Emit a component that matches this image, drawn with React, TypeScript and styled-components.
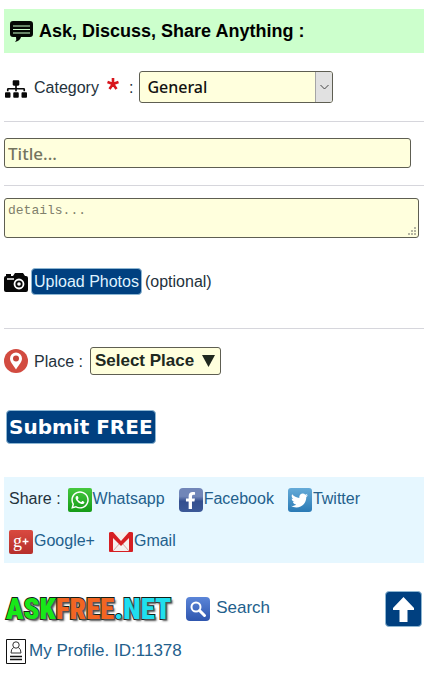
import React from "react";
import styled, { createGlobalStyle } from "styled-components";
import { FaFacebookF, FaSitemap, FaTwitter, FaWhatsapp } from "react-icons/fa";

const GlobalStyle = createGlobalStyle`
  *, *::before, *::after { box-sizing: border-box; }
  body {
    margin: 0;
    background: #fff;
    color: #24323c;
    font: 16px/20px "Liberation Sans", Arial, sans-serif;
  }
  button, input, select, textarea { margin: 0; font: inherit; }
`;

const Page = styled.main`
  display: flex;
  flex-direction: column;
  padding: 9px 8px 8px 4px;
`;

const Heading = styled.h1`
  display: flex;
  align-items: center;
  gap: 6px;
  height: 44px;
  margin: 0;
  padding: 0 6px;
  background: #cfc;
  color: #000;
  font-size: 18px;
  line-height: 24px;
`;

const Form = styled.form`
  display: flex;
  flex-direction: column;
  align-items: flex-start;
`;

const Rule = styled.hr`
  width: 100%;
  height: 1px;
  margin: 0;
  border: 0;
  background: #d6d6dc;
`;

const Row = styled.div<{ $top: number; $bottom: number }>`
  display: flex;
  align-items: center;
  width: 100%;
  padding: ${(p) => p.$top}px 0 ${(p) => p.$bottom}px;
`;

const Label = styled.label`
  margin: 0 7px 0 6px;
  padding-top: 2px;
`;

const Colon = styled.span`
  margin: 0 6px 0 9px;
  padding-top: 2px;
`;

const SelectWrap = styled.div`
  display: grid;
  width: 194px;
  height: 32px;
  overflow: hidden;
  border: 1px solid #5e5e52;
  border-radius: 3px;
  background: #ffd;
`;

const Select = styled.select`
  grid-area: 1 / 1;
  padding: 0 24px 0 7px;
  border: 0;
  appearance: none;
  background: transparent;
  color: #111;
  font: 500 16px/28px "Noto Sans", sans-serif;
`;

const SelectArrow = styled.span`
  grid-area: 1 / 1;
  justify-self: end;
  display: flex;
  align-items: center;
  justify-content: center;
  width: 17px;
  border-left: 1px solid #a5a5a5;
  background: #e1e1e1;
  pointer-events: none;
`;

const TitleInput = styled.input`
  width: calc(100% - 13px);
  height: 30px;
  margin: 16px 0 17px;
  padding: 0 3px;
  border: 1px solid #5e5e52;
  border-radius: 3px;
  background: #ffd;
  font: 500 17px/28px "Noto Sans", sans-serif;
  &::placeholder { color: #74745f; opacity: 1; }
`;

const DetailsWrap = styled.div`
  position: relative;
  width: calc(100% - 5px);
  margin-top: 12px;
`;

const Details = styled.textarea`
  display: block;
  width: 100%;
  height: 40px;
  padding: 4px 3px;
  border: 1px solid #5e5e52;
  border-radius: 3px;
  background: #ffd;
  resize: none;
  font: 13px/16px "Liberation Mono", monospace;
  &::placeholder { color: #80806c; opacity: 1; }
`;

const Grip = styled.svg`
  position: absolute;
  right: 3px;
  bottom: 3px;
`;

const BlueButton = styled.button<{ $large?: boolean }>`
  height: ${(p) => (p.$large ? 34 : 27)}px;
  margin: ${(p) => (p.$large ? "20px 2px 33px" : "0 3px")};
  padding: 0 2px;
  border: 1px solid #8db6d2;
  border-radius: 4px;
  background: #004080;
  color: ${(p) => (p.$large ? "#fff" : "#dff2ff")};
  font: ${(p) =>
    p.$large
      ? 'bold 20px/30px "DejaVu Sans", sans-serif'
      : '16px/24px "Liberation Sans", Arial, sans-serif'};
`;

const PlaceButton = styled.button`
  display: flex;
  align-items: center;
  gap: 8px;
  height: 28px;
  padding: 0 5px 0 4px;
  border: 1px solid #5e5e52;
  border-radius: 3px;
  background: #ffd;
  color: #20281f;
  font-size: 17px;
  line-height: 24px;
  font-weight: bold;
`;

const Share = styled.section`
  display: flex;
  flex-wrap: wrap;
  align-content: flex-start;
  column-gap: 14px;
  row-gap: 18px;
  padding: 11px 5px 9px;
  background: #e6f7ff;
`;

const ShareGroup = styled.div`
  display: flex;
  align-items: center;
  gap: 7px;
`;

const Link = styled.a<{ $gap?: number; $size?: number }>`
  display: flex;
  align-items: center;
  gap: ${(p) => p.$gap ?? 1}px;
  color: #23608c;
  font-size: ${(p) => p.$size ?? 16}px;
  text-decoration: none;
  svg { flex: none; }
`;

const LinkText = styled.span`
  padding-bottom: 2px;
`;

const Badge = styled.span<{ $fill: string; $round: number }>`
  display: flex;
  align-items: center;
  justify-content: center;
  width: 24px;
  height: 24px;
  border-radius: ${(p) => p.$round}px;
  background: ${(p) => p.$fill};
  color: #fff;
`;

const Footer = styled.footer`
  display: flex;
  flex-direction: column;
  gap: 12px;
  padding-top: 28px;
`;

const FooterBar = styled.div`
  display: flex;
  align-items: center;
  gap: 15px;
  padding-right: 2px;
`;

const Logo = styled.a`
  padding-left: 2px;
  color: #18e818;
  font: 900 29px/32px "Liberation Sans Narrow", "Roboto Condensed", "DejaVu Sans Condensed", sans-serif;
  text-decoration: none;
  text-shadow: 2px 2px 2px #555;
  -webkit-text-stroke: 2px #122018;
  paint-order: stroke fill;
`;

const LogoPart = styled.span<{ $color: string }>`
  color: ${(p) => p.$color};
`;

const TopButton = styled.button`
  display: flex;
  align-items: center;
  justify-content: center;
  width: 37px;
  height: 36px;
  margin-left: auto;
  padding: 0;
  border: 1px solid #8db6d2;
  border-radius: 4px;
  background: #004080;
`;

const ProfileRow = styled.div`
  display: flex;
  padding-left: 2px;
`;

export default function App() {
  return (
    <Page>
      <GlobalStyle />
      <Heading>
        <svg width="23" height="23" viewBox="0 0 23 23" aria-hidden="true">
          <path d="M3 1h17q3 0 3 3v10q0 3-3 3h-9q-1 4-6 5 2-2 1-5H3q-3 0-3-3V4q0-3 3-3z" fill="#050805" />
          <path d="M3 6h17M3 9.500h17M3 13h17" stroke="#cfc" strokeWidth="1.200" />
        </svg>
        Ask, Discuss, Share Anything :
      </Heading>

      <Form onSubmit={(e) => e.preventDefault()}>
        <Row $top={18} $bottom={18}>
          <svg width="24" height="24" viewBox="0 0 24 24" aria-hidden="true">
            <FaSitemap x={1} y={3} size={22} color="#080808" />
          </svg>
          <Label htmlFor="category">Category</Label>
          <svg width="14" height="24" viewBox="0 0 14 24" role="img" aria-label="required">
            <path d="M7 9V3M7 9L1.500 7M7 9l5.500-2M7 9l-3.500 5M7 9l3.500 5" stroke="#d8151c" strokeWidth="2.600" />
          </svg>
          <Colon>:</Colon>
          <SelectWrap>
            <Select id="category" defaultValue="General">
              <option>General</option>
            </Select>
            <SelectArrow>
              <svg width="9" height="6" viewBox="0 0 9 6" aria-hidden="true">
                <path d="M.5 1l4 4 4-4" fill="none" stroke="#444" />
              </svg>
            </SelectArrow>
          </SelectWrap>
        </Row>
        <Rule />
        <TitleInput placeholder="Title..." aria-label="Title" />
        <Rule />
        <DetailsWrap>
          <Details placeholder="details..." aria-label="Details" />
          <Grip width="8" height="8" viewBox="0 0 8 8" aria-hidden="true">
            <path d="M6 0h2v2H6zM3 3h2v2H3zM6 3h2v2H6zM0 6h2v2H0zM3 6h2v2H3zM6 6h2v2H6z" fill="#b5b5a2" />
          </Grip>
        </DetailsWrap>

        <Row $top={30} $bottom={33}>
          <svg width="24" height="20" viewBox="0 0 24 20" aria-hidden="true">
            <path d="M2 2h5v2h2l2-3h8l2 3h1q2 0 2 2v12q0 2-2 2H2q-2 0-2-2V6q0-2 2-2z" fill="#070707" />
            <circle cx="15" cy="12" r="4.500" fill="none" stroke="#fff" strokeWidth="1.800" />
            <circle cx="15" cy="12" r="1.800" fill="#fff" />
            <path d="M3 7h7" stroke="#fff" strokeWidth="1.500" />
          </svg>
          <BlueButton type="button">Upload Photos</BlueButton>
          <span>(optional)</span>
        </Row>
        <Rule />

        <Row $top={18} $bottom={15}>
          <svg width="24" height="24" viewBox="0 0 24 24" aria-hidden="true">
            <circle cx="12" cy="12" r="12" fill="#d24b40" />
            <path d="M12 20.500C9 15.500 6 13 6 9.500a6 6 0 0 1 12 0C18 13 15 15.500 12 20.500z" fill="#fff" />
            <circle cx="12" cy="9.500" r="3" fill="#c6453b" />
          </svg>
          <Label htmlFor="place">Place :</Label>
          <PlaceButton id="place" type="button">
            Select Place
            <svg width="13" height="12" viewBox="0 0 13 12" aria-hidden="true">
              <path d="M0 0h13L6.500 12z" fill="#20281f" />
            </svg>
          </PlaceButton>
        </Row>
        <BlueButton $large type="submit">Submit FREE</BlueButton>
      </Form>

      <Share aria-label="Share">
        <ShareGroup>
          <LinkText>Share :</LinkText>
          <Link href="#whatsapp">
            <Badge $fill="linear-gradient(#46c83f, #159b17)" $round={2}><FaWhatsapp size={20} /></Badge>
            <LinkText>Whatsapp</LinkText>
          </Link>
        </ShareGroup>
        <Link href="#facebook">
          <Badge $fill="linear-gradient(#7186b8 0 35%, #344f8f 55%, #3c5998)" $round={4}><FaFacebookF size={17} /></Badge>
          <LinkText>Facebook</LinkText>
        </Link>
        <Link href="#twitter">
          <Badge $fill="linear-gradient(#65abd8, #2a7ab5)" $round={3}><FaTwitter size={17} /></Badge>
          <LinkText>Twitter</LinkText>
        </Link>
        <Link href="#google">
          <Badge $fill="linear-gradient(#d94a40, #b62f2b)" $round={2}>
            <svg width="24" height="24" viewBox="0 0 24 24" aria-hidden="true">
              <text x="4" y="17" fill="#fff" fontFamily="Liberation Serif, serif" fontSize="18">g</text>
              <path d="M13.500 11.500h6M16.500 8.500v6" stroke="#fff" strokeWidth="1.500" />
            </svg>
          </Badge>
          <LinkText>Google+</LinkText>
        </Link>
        <Link href="#gmail">
          <svg width="24" height="20" viewBox="0 0 24 20" aria-hidden="true">
            <path d="M1 0h22v20H1z" fill="#f5f0ee" />
            <path d="M4 19l7-8M20 19l-7-8" stroke="#d8a6a2" />
            <path d="M3 19.500h18" stroke="#d61f23" />
            <path d="M0 1q0-1 2-1h2l8 9 8-9h2q2 0 2 1v18q0 1-1 1h-3V6l-8 8-8-8v14H1q-1 0-1-1z" fill="#d61f23" />
          </svg>
          <LinkText>Gmail</LinkText>
        </Link>
      </Share>

      <Footer>
        <FooterBar>
          <Logo href="#home">ASK<LogoPart $color="#f26522">FREE</LogoPart><LogoPart $color="#20dfee">.NET</LogoPart></Logo>
          <Link href="#search" $gap={6} $size={17}>
            <Badge $fill="linear-gradient(#5b85d8, #2f56ae)" $round={4}>
              <svg width="18" height="18" viewBox="0 0 18 18" aria-hidden="true">
                <circle cx="7" cy="7" r="4.500" fill="none" stroke="#fff" strokeWidth="2" />
                <path d="M10.500 10.500l5 5" stroke="#fff" strokeWidth="3" strokeLinecap="round" />
              </svg>
            </Badge>
            <LinkText>Search</LinkText>
          </Link>
          <TopButton type="button" aria-label="Back to top">
            <svg width="21" height="25" viewBox="0 0 21 25" aria-hidden="true">
              <path d="M10.500 0L21 11v2h-6.500v12h-8V13H0v-2z" fill="#fff" />
            </svg>
          </TopButton>
        </FooterBar>
        <ProfileRow>
          <Link href="#profile" $gap={3} $size={17}>
            <svg width="20" height="25" viewBox="0 0 20 25" aria-hidden="true">
              <path d="M.5.5h19v24H.5z" fill="#fff" stroke="#111" />
              <circle cx="10" cy="6" r="3.200" fill="none" stroke="#333" />
              <path d="M7.500 8.500Q5 10 5 14h10q0-4-2.500-5.500" fill="none" stroke="#333" />
              <path d="M4 17.500h12M4 20.500h12" stroke="#111" strokeWidth="1.300" />
            </svg>
            <LinkText>My Profile. ID:11378</LinkText>
          </Link>
        </ProfileRow>
      </Footer>
    </Page>
  );
}
